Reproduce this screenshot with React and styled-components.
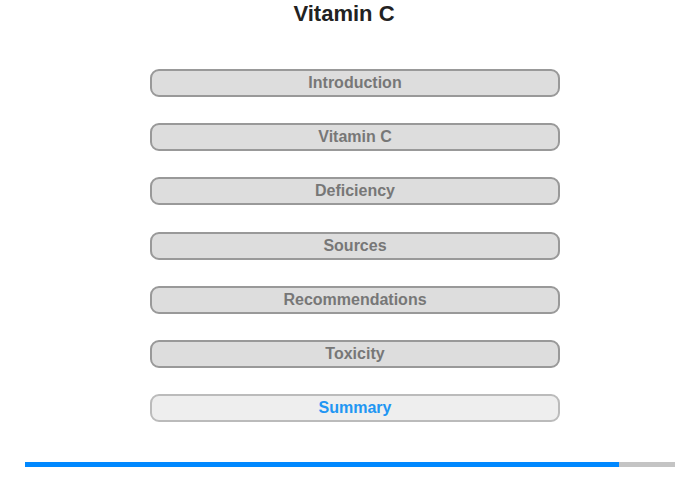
import styled, { createGlobalStyle } from "styled-components";

const GlobalStyle = createGlobalStyle`
	body {
		margin: 0;
		background: #fff;
		font-family: "Liberation Sans", Arial, sans-serif;
	}
`;

const Page = styled.div`
	width: 700px;
	height: 480px;
	display: flex;
	flex-direction: column;
	align-items: center;
`;

const Title = styled.h1`
	margin: 0;
	padding-top: 1px;
	margin-right: 12px;
	height: 28px;
	font-size: 22px;
	line-height: 26px;
	font-weight: bold;
	color: #222;
`;

const Menu = styled.div`
	display: flex;
	flex-direction: column;
	gap: 26.2px;
	margin-top: 40px;
	margin-left: 10px;
`;

const Item = styled.div`
	width: 410px;
	height: 28px;
	box-sizing: border-box;
	border: 2px solid ${(p) => (p.active ? "#bbb" : "#999")};
	border-radius: 9px;
	background: ${(p) => (p.active ? "#eee" : "#ddd")};
	color: ${(p) => (p.active ? "#2196f3" : "#777")};
	font-size: 16px;
	font-weight: bold;
	display: flex;
	align-items: center;
	justify-content: center;
`;

const Track = styled.div`
	margin-top: 40px;
	width: 650px;
	height: 5px;
	background: #c4c4c4;
	display: flex;
`;

const Fill = styled.div`
	height: 100%;
	background: #0088ff;
`;

const items = [
	"Introduction",
	"Vitamin C",
	"Deficiency",
	"Sources",
	"Recommendations",
	"Toxicity",
	"Summary",
];

const App = () => {
	const progress = 594 / 650;
	return (
		<Page>
			<GlobalStyle />
			<Title>Vitamin C</Title>
			<Menu>
				{items.map((name) => (
					<Item key={name} active={name === "Summary"}>
						{name}
					</Item>
				))}
			</Menu>
			<Track>
				<Fill style={{ width: `${progress * 100}%` }} />
			</Track>
		</Page>
	);
};

export default App;
